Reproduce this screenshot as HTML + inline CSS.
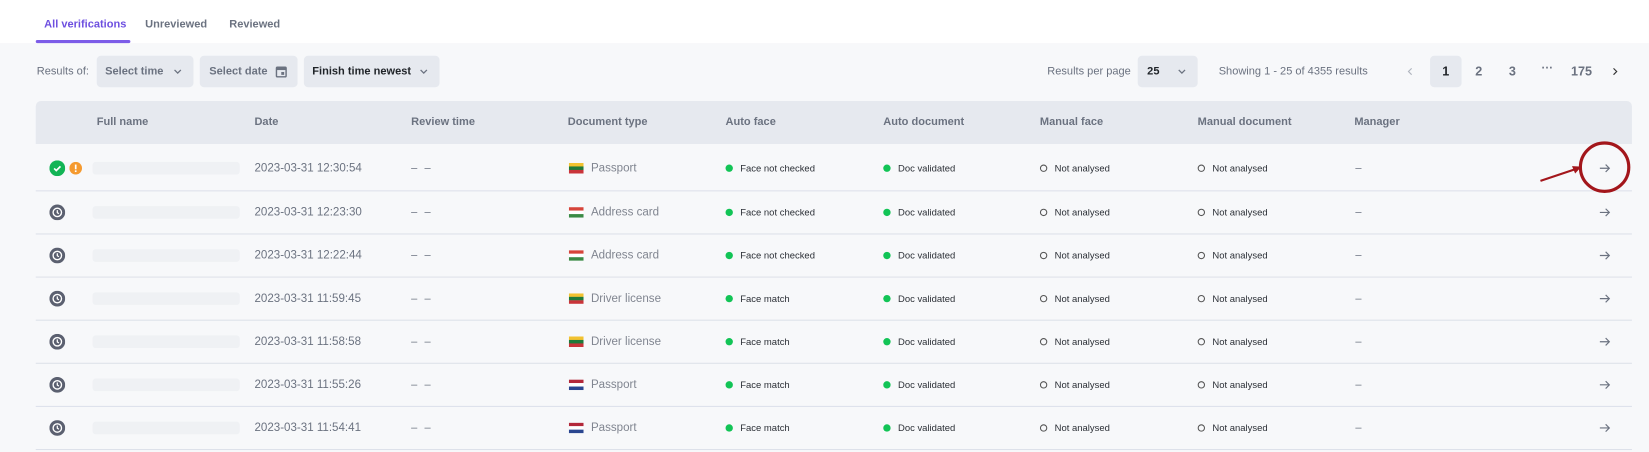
<!DOCTYPE html>
<html><head><meta charset="utf-8"><style>
*{margin:0;padding:0;box-sizing:border-box}
body{width:1649px;height:452px;background:#f7f8fa;font-family:"Liberation Sans",sans-serif;overflow:hidden;color:#6b7280}
#w{position:absolute;left:0;top:0;width:1568px;height:430px;transform:scale(1.0515);transform-origin:0 0}
.a{position:absolute;white-space:nowrap}
.top{position:absolute;left:0;top:0;width:1568px;height:41px;background:#fff}
.tab{position:absolute;top:17px;font-size:10.5px;font-weight:bold;color:#6b7280}
.box{position:absolute;background:#e6e9ef;border-radius:4px;font-size:10.5px;font-weight:bold;color:#6b7280;line-height:30px}
.box svg.ch{position:absolute;right:11px;top:12px}
.hdr{position:absolute;left:34px;top:96px;width:1518px;height:41px;background:#e6e9ef;border-radius:5px 5px 0 0}
.h{position:absolute;top:110px;font-size:10.5px;font-weight:bold;color:#6b7280}
.ln{position:absolute;left:34px;width:1518px;height:1px;background:#dde1ea}
.row{position:absolute;left:0;width:1568px;height:41px}
.row>*{position:absolute;top:50%;transform:translateY(-50%);white-space:nowrap}
.dt{left:242px;font-size:11px;color:#6b7280}
.rv{left:391px;font-size:10.5px;color:#6b7280;letter-spacing:2px}
.doc{left:562px;font-size:11px;color:#808590}
.flag{left:541px;width:14px;height:10px}
.st{font-size:9px;color:#2b2f36}
.g{width:7px;height:7px;border-radius:50%;background:#12c456}
.o{width:7px;height:7px;border-radius:50%;border:1px solid #555}
.mg{left:1289px;font-size:10.5px}
.ar{left:1521px}
.nm{left:88px;width:140px;height:12px;background:#eff1f4;border-radius:3px}
</style></head><body><div id="w">
<div class="top"></div>
<div class="tab" style="left:42px;color:#6d4fe0">All verifications</div>
<div class="a" style="left:34px;top:38px;width:90px;height:3px;background:#7c5ce8;border-radius:2px"></div>
<div class="tab" style="left:138px">Unreviewed</div>
<div class="tab" style="left:218px">Reviewed</div>

<div class="a" style="left:35px;top:62px;font-size:10.5px">Results of:</div>
<div class="box" style="left:92px;top:53px;width:92px;padding-left:8px">Select time <svg class="ch" width="8" height="6" viewBox="0 0 8 6"><path d="M1 1.5l3 3 3-3" stroke="#6b7280" stroke-width="1.2" fill="none"/></svg></div>
<div class="box" style="left:190px;top:53px;width:93px;padding-left:9px">Select date
<svg style="position:absolute;left:72px;top:9px" width="11" height="12" viewBox="0 0 12 13"><rect x="1" y="2" width="10" height="10" rx="1" fill="none" stroke="#6b7280" stroke-width="1.5"/><rect x="1" y="2" width="10" height="3" fill="#6b7280"/><rect x="6" y="7" width="3" height="3" fill="#6b7280"/></svg></div>
<div class="box" style="left:289px;top:53px;width:129px;padding-left:8px;color:#1f2328">Finish time newest <svg class="ch" width="8" height="6" viewBox="0 0 8 6"><path d="M1 1.5l3 3 3-3" stroke="#6b7280" stroke-width="1.2" fill="none"/></svg></div>

<div class="a" style="left:996px;top:62px;font-size:10.5px">Results per page</div>
<div class="box" style="left:1082px;top:53px;width:57px;padding-left:9px;color:#1f2328">25 <svg class="ch" width="8" height="6" viewBox="0 0 8 6"><path d="M1 1.5l3 3 3-3" stroke="#6b7280" stroke-width="1.2" fill="none"/></svg></div>
<div class="a" style="left:1159px;top:62px;font-size:10.5px">Showing 1 - 25 of 4355 results</div>
<svg class="a" style="left:1338px;top:64px" width="6" height="8" viewBox="0 0 6 8"><path d="M4.5 1l-3 3 3 3" stroke="#b0b5bf" stroke-width="1.1" fill="none"/></svg>
<div class="box" style="left:1360px;top:53px;width:30px;text-align:center;color:#1f2328;font-size:12px">1</div>
<div class="a" style="left:1403px;top:61px;font-size:12px;font-weight:bold">2</div>
<div class="a" style="left:1435px;top:61px;font-size:12px;font-weight:bold">3</div>
<div class="a" style="left:1466px;top:59px;font-size:11px;font-weight:bold">···</div>
<div class="a" style="left:1494px;top:61px;font-size:12px;font-weight:bold">175</div>
<svg class="a" style="left:1533px;top:64px" width="6" height="8" viewBox="0 0 6 8"><path d="M1.5 1l3 3-3 3" stroke="#333" stroke-width="1.1" fill="none"/></svg>

<div class="hdr"></div>
<div class="h" style="left:92px">Full name</div>
<div class="h" style="left:242px">Date</div>
<div class="h" style="left:391px">Review time</div>
<div class="h" style="left:540px">Document type</div>
<div class="h" style="left:690px">Auto face</div>
<div class="h" style="left:840px">Auto document</div>
<div class="h" style="left:989px">Manual face</div>
<div class="h" style="left:1139px">Manual document</div>
<div class="h" style="left:1288px">Manager</div>

<div class="row" style="top:139px">
<svg style="left:47px" width="15" height="15" viewBox="0 0 15 15"><circle cx="7.5" cy="7.5" r="7.5" fill="#12b455"/><path d="M4.5 7.7l2 2 4-4" stroke="#fff" stroke-width="1.6" fill="none"/></svg>
<svg style="left:66px" width="12" height="12" viewBox="0 0 12 12"><circle cx="6" cy="6" r="6" fill="#f59a2f"/><rect x="5.2" y="2.5" width="1.6" height="4.5" fill="#fff"/><rect x="5.2" y="8" width="1.6" height="1.6" fill="#fff"/></svg>
<div class="nm"></div><div class="dt">2023-03-31 12:30:54</div><div class="rv">– –</div>
<svg class="flag" viewBox="0 0 14 10"><rect width="14" height="3.4" fill="#f2c230"/><rect y="3.3" width="14" height="3.4" fill="#1f7a3a"/><rect y="6.6" width="14" height="3.4" fill="#c9343a"/></svg><div class="doc">Passport</div>
<div class="g" style="left:690px"></div><div class="st" style="left:704px">Face not checked</div>
<div class="g" style="left:840px"></div><div class="st" style="left:854px">Doc validated</div>
<div class="o" style="left:989px"></div><div class="st" style="left:1003px">Not analysed</div>
<div class="o" style="left:1139px"></div><div class="st" style="left:1153px">Not analysed</div>
<div class="mg">–</div><svg class="ar" width="11" height="9" viewBox="0 0 11 9"><path d="M0.5 4.5h9M6 1l3.5 3.5L6 8" stroke="#6b7280" stroke-width="1.1" fill="none"/></svg>
</div>
<div class="ln" style="top:181px"></div>

<div class="row" style="top:181px">
<svg style="left:47px" width="15" height="15" viewBox="0 0 15 15"><circle cx="7.5" cy="7.5" r="7.5" fill="#5b6070"/><circle cx="7.5" cy="7.5" r="4" fill="none" stroke="#fff" stroke-width="1.3"/><path d="M7.5 5.3v2.4l1.5 1" stroke="#fff" stroke-width="1.2" fill="none"/></svg>
<div class="nm"></div><div class="dt">2023-03-31 12:23:30</div><div class="rv">– –</div>
<svg class="flag" viewBox="0 0 14 10"><rect width="14" height="3.4" fill="#d6443a"/><rect y="3.3" width="14" height="3.4" fill="#fff"/><rect y="6.6" width="14" height="3.4" fill="#3a8a45"/></svg><div class="doc">Address card</div>
<div class="g" style="left:690px"></div><div class="st" style="left:704px">Face not checked</div>
<div class="g" style="left:840px"></div><div class="st" style="left:854px">Doc validated</div>
<div class="o" style="left:989px"></div><div class="st" style="left:1003px">Not analysed</div>
<div class="o" style="left:1139px"></div><div class="st" style="left:1153px">Not analysed</div>
<div class="mg">–</div><svg class="ar" width="11" height="9" viewBox="0 0 11 9"><path d="M0.5 4.5h9M6 1l3.5 3.5L6 8" stroke="#6b7280" stroke-width="1.1" fill="none"/></svg>
</div>
<div class="ln" style="top:222px"></div>

<div class="row" style="top:222px">
<svg style="left:47px" width="15" height="15" viewBox="0 0 15 15"><circle cx="7.5" cy="7.5" r="7.5" fill="#5b6070"/><circle cx="7.5" cy="7.5" r="4" fill="none" stroke="#fff" stroke-width="1.3"/><path d="M7.5 5.3v2.4l1.5 1" stroke="#fff" stroke-width="1.2" fill="none"/></svg>
<div class="nm"></div><div class="dt">2023-03-31 12:22:44</div><div class="rv">– –</div>
<svg class="flag" viewBox="0 0 14 10"><rect width="14" height="3.4" fill="#d6443a"/><rect y="3.3" width="14" height="3.4" fill="#fff"/><rect y="6.6" width="14" height="3.4" fill="#3a8a45"/></svg><div class="doc">Address card</div>
<div class="g" style="left:690px"></div><div class="st" style="left:704px">Face not checked</div>
<div class="g" style="left:840px"></div><div class="st" style="left:854px">Doc validated</div>
<div class="o" style="left:989px"></div><div class="st" style="left:1003px">Not analysed</div>
<div class="o" style="left:1139px"></div><div class="st" style="left:1153px">Not analysed</div>
<div class="mg">–</div><svg class="ar" width="11" height="9" viewBox="0 0 11 9"><path d="M0.5 4.5h9M6 1l3.5 3.5L6 8" stroke="#6b7280" stroke-width="1.1" fill="none"/></svg>
</div>
<div class="ln" style="top:263px"></div>

<div class="row" style="top:263px">
<svg style="left:47px" width="15" height="15" viewBox="0 0 15 15"><circle cx="7.5" cy="7.5" r="7.5" fill="#5b6070"/><circle cx="7.5" cy="7.5" r="4" fill="none" stroke="#fff" stroke-width="1.3"/><path d="M7.5 5.3v2.4l1.5 1" stroke="#fff" stroke-width="1.2" fill="none"/></svg>
<div class="nm"></div><div class="dt">2023-03-31 11:59:45</div><div class="rv">– –</div>
<svg class="flag" viewBox="0 0 14 10"><rect width="14" height="3.4" fill="#f2c230"/><rect y="3.3" width="14" height="3.4" fill="#1f7a3a"/><rect y="6.6" width="14" height="3.4" fill="#c9343a"/></svg><div class="doc">Driver license</div>
<div class="g" style="left:690px"></div><div class="st" style="left:704px">Face match</div>
<div class="g" style="left:840px"></div><div class="st" style="left:854px">Doc validated</div>
<div class="o" style="left:989px"></div><div class="st" style="left:1003px">Not analysed</div>
<div class="o" style="left:1139px"></div><div class="st" style="left:1153px">Not analysed</div>
<div class="mg">–</div><svg class="ar" width="11" height="9" viewBox="0 0 11 9"><path d="M0.5 4.5h9M6 1l3.5 3.5L6 8" stroke="#6b7280" stroke-width="1.1" fill="none"/></svg>
</div>
<div class="ln" style="top:304px"></div>

<div class="row" style="top:304px">
<svg style="left:47px" width="15" height="15" viewBox="0 0 15 15"><circle cx="7.5" cy="7.5" r="7.5" fill="#5b6070"/><circle cx="7.5" cy="7.5" r="4" fill="none" stroke="#fff" stroke-width="1.3"/><path d="M7.5 5.3v2.4l1.5 1" stroke="#fff" stroke-width="1.2" fill="none"/></svg>
<div class="nm"></div><div class="dt">2023-03-31 11:58:58</div><div class="rv">– –</div>
<svg class="flag" viewBox="0 0 14 10"><rect width="14" height="3.4" fill="#f2c230"/><rect y="3.3" width="14" height="3.4" fill="#1f7a3a"/><rect y="6.6" width="14" height="3.4" fill="#c9343a"/></svg><div class="doc">Driver license</div>
<div class="g" style="left:690px"></div><div class="st" style="left:704px">Face match</div>
<div class="g" style="left:840px"></div><div class="st" style="left:854px">Doc validated</div>
<div class="o" style="left:989px"></div><div class="st" style="left:1003px">Not analysed</div>
<div class="o" style="left:1139px"></div><div class="st" style="left:1153px">Not analysed</div>
<div class="mg">–</div><svg class="ar" width="11" height="9" viewBox="0 0 11 9"><path d="M0.5 4.5h9M6 1l3.5 3.5L6 8" stroke="#6b7280" stroke-width="1.1" fill="none"/></svg>
</div>
<div class="ln" style="top:345px"></div>

<div class="row" style="top:345px">
<svg style="left:47px" width="15" height="15" viewBox="0 0 15 15"><circle cx="7.5" cy="7.5" r="7.5" fill="#5b6070"/><circle cx="7.5" cy="7.5" r="4" fill="none" stroke="#fff" stroke-width="1.3"/><path d="M7.5 5.3v2.4l1.5 1" stroke="#fff" stroke-width="1.2" fill="none"/></svg>
<div class="nm"></div><div class="dt">2023-03-31 11:55:26</div><div class="rv">– –</div>
<svg class="flag" viewBox="0 0 14 10"><rect width="14" height="3.4" fill="#b3283a"/><rect y="3.3" width="14" height="3.4" fill="#fff"/><rect y="6.6" width="14" height="3.4" fill="#2a4690"/></svg><div class="doc">Passport</div>
<div class="g" style="left:690px"></div><div class="st" style="left:704px">Face match</div>
<div class="g" style="left:840px"></div><div class="st" style="left:854px">Doc validated</div>
<div class="o" style="left:989px"></div><div class="st" style="left:1003px">Not analysed</div>
<div class="o" style="left:1139px"></div><div class="st" style="left:1153px">Not analysed</div>
<div class="mg">–</div><svg class="ar" width="11" height="9" viewBox="0 0 11 9"><path d="M0.5 4.5h9M6 1l3.5 3.5L6 8" stroke="#6b7280" stroke-width="1.1" fill="none"/></svg>
</div>
<div class="ln" style="top:386px"></div>

<div class="row" style="top:386px">
<svg style="left:47px" width="15" height="15" viewBox="0 0 15 15"><circle cx="7.5" cy="7.5" r="7.5" fill="#5b6070"/><circle cx="7.5" cy="7.5" r="4" fill="none" stroke="#fff" stroke-width="1.3"/><path d="M7.5 5.3v2.4l1.5 1" stroke="#fff" stroke-width="1.2" fill="none"/></svg>
<div class="nm"></div><div class="dt">2023-03-31 11:54:41</div><div class="rv">– –</div>
<svg class="flag" viewBox="0 0 14 10"><rect width="14" height="3.4" fill="#b3283a"/><rect y="3.3" width="14" height="3.4" fill="#fff"/><rect y="6.6" width="14" height="3.4" fill="#2a4690"/></svg><div class="doc">Passport</div>
<div class="g" style="left:690px"></div><div class="st" style="left:704px">Face match</div>
<div class="g" style="left:840px"></div><div class="st" style="left:854px">Doc validated</div>
<div class="o" style="left:989px"></div><div class="st" style="left:1003px">Not analysed</div>
<div class="o" style="left:1139px"></div><div class="st" style="left:1153px">Not analysed</div>
<div class="mg">–</div><svg class="ar" width="11" height="9" viewBox="0 0 11 9"><path d="M0.5 4.5h9M6 1l3.5 3.5L6 8" stroke="#6b7280" stroke-width="1.1" fill="none"/></svg>
</div>
<div class="ln" style="top:427px"></div>

<svg class="a" style="left:0;top:0" width="1568" height="430">
<circle cx="1526" cy="159" r="23" fill="none" stroke="#a3161b" stroke-width="3"/>
<line x1="1465" y1="172" x2="1498" y2="161" stroke="#a3161b" stroke-width="2"/>
<path d="M1504 158.5l-9-0.5 3 7z" fill="#a3161b"/>
</svg>
</div></body></html>
